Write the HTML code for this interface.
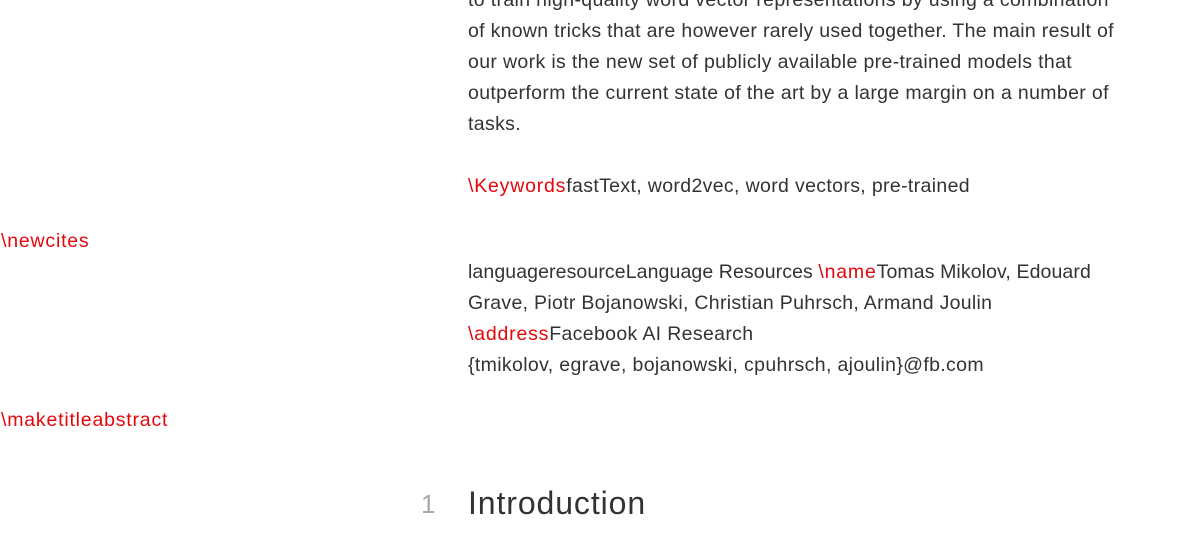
<!DOCTYPE html>
<html><head><meta charset="utf-8"><style>
body{margin:0;width:1181px;height:534px;overflow:hidden;background:#fff;font-family:"Liberation Sans",sans-serif;color:#333;font-size:19.5px;letter-spacing:0.35px;}
.l{position:absolute;white-space:nowrap;line-height:31px;}
.r{color:#e4070c;letter-spacing:0.8px}
</style></head><body>
<div class="l" style="left:468px;top:-15px">to train high-quality word vector representations by using a combination</div>
<div class="l" style="left:468px;top:16px;letter-spacing:0.3px">of known tricks that are however rarely used together. The main result of</div>
<div class="l" style="left:468px;top:47px">our work is the new set of publicly available pre-trained models that</div>
<div class="l" style="left:468px;top:78px">outperform the current state of the art by a large margin on a number of</div>
<div class="l" style="left:468px;top:109px">tasks.</div>
<div class="l" style="left:468px;top:171px"><span class="r">\Keywords</span>fastText, word2vec, word vectors, pre-trained</div>
<div class="l r" style="left:1px;top:226px">\newcites</div>
<div class="l" style="left:468px;top:257px;letter-spacing:0.1px">languageresourceLanguage Resources <span class="r">\name</span>Tomas Mikolov, Edouard</div>
<div class="l" style="left:468px;top:288px;letter-spacing:0.3px">Grave, Piotr Bojanowski, Christian Puhrsch, Armand Joulin</div>
<div class="l" style="left:468px;top:319px"><span class="r">\address</span>Facebook AI Research</div>
<div class="l" style="left:468px;top:350px">{tmikolov, egrave, bojanowski, cpuhrsch, ajoulin}@fb.com</div>
<div class="l r" style="left:1px;top:405px">\maketitleabstract</div>
<div class="l" style="left:421px;top:489px;font-size:26px;color:#aaa">1</div>
<div class="l" style="left:468px;top:488px;font-size:32px;letter-spacing:0.9px">Introduction</div>
</body></html>
